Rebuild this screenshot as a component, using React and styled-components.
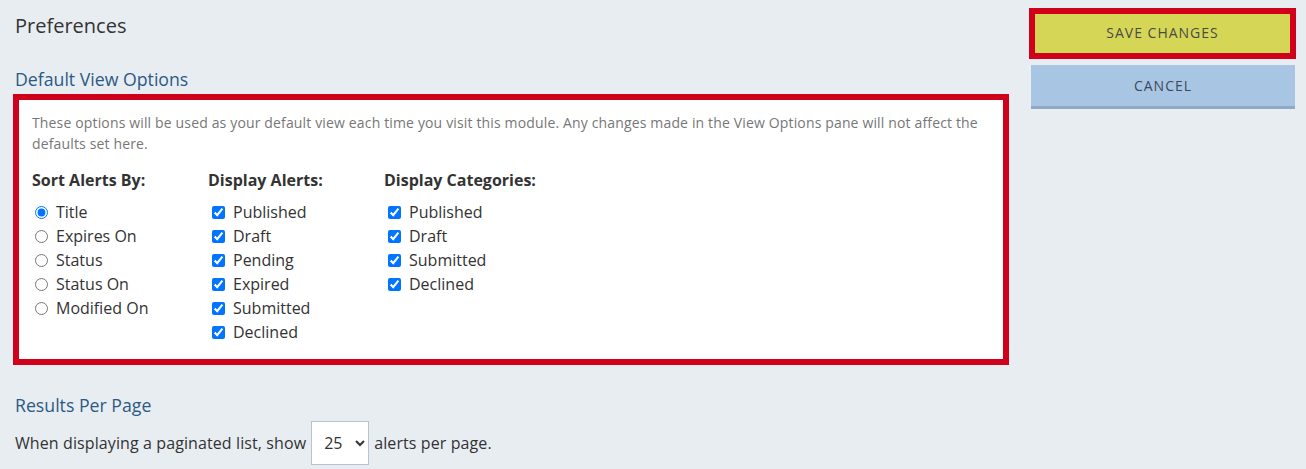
import React from "react";
import styled, { createGlobalStyle } from "styled-components";

const GlobalStyle = createGlobalStyle`
  body {
    margin: 0;
    background: #e8edf2;
    font-family: "Open Sans", "Noto Sans", sans-serif;
  }
`;

const Page = styled.div`
  display: flex;
  align-items: flex-start;
  gap: 20px;
  padding: 8px 10px 0 13px;
  height: 469px;
  box-sizing: border-box;
  overflow: hidden;
`;

const Main = styled.div`
  width: 996px;
  flex-shrink: 0;
`;

const PageTitle = styled.h1`
  margin: 0 0 0 2px;
  padding-top: 4px;
  font-size: 20px;
  line-height: 28px;
  font-weight: 400;
  color: #333;
`;

const SectionTitle = styled.h2`
  margin: ${({ $top }) => $top}px 0 0 2px;
  font-size: 17.7px;
  line-height: 22px;
  font-weight: 400;
  color: #2c5a84;
`;

const OptionsBox = styled.div`
  margin-top: 4px;
  border: 6px solid #d0021b;
  background: #fff;
  padding: 12px 13px 15px;
`;

const Intro = styled.p`
  margin: 0;
  font-size: 14px;
  line-height: 21px;
  letter-spacing: 0.15px;
  color: #777;
`;

const Columns = styled.div`
  display: flex;
  margin-top: 16px;
`;

const Column = styled.div`
  width: 176px;
`;

const ColumnTitle = styled.div`
  font-size: 16px;
  line-height: 20px;
  font-weight: 700;
  color: #333;
  margin-bottom: 10px;
`;

const Option = styled.label`
  display: flex;
  align-items: center;
  height: 24px;
  font-size: 16px;
  color: #333;

  input {
    width: 13px;
    height: 13px;
    margin: 0 8px 0 ${({ $inset }) => $inset}px;
  }
`;

const PerPageRow = styled.div`
  display: flex;
  align-items: center;
  gap: 5px;
  margin: 5px 0 0 2px;
  font-size: 16px;
  letter-spacing: 0.1px;
  color: #333;
`;

const Select = styled.select`
  height: 44px;
  width: 58px;
  padding: 0 4px 0 8px;
  border: 1px solid #b7c3d0;
  border-radius: 0;
  background: #fff;
  font-family: inherit;
  font-size: 16px;
  color: #333;
`;

const Sidebar = styled.div`
  width: 267px;
  flex-shrink: 0;
`;

const Highlight = styled.div`
  border: 6px solid #d0021b;
`;

const Button = styled.button`
  display: block;
  width: 100%;
  height: ${({ $h }) => $h}px;
  padding: 0 0 ${({ $lift }) => $lift || 0}px;
  border: none;
  border-bottom: ${({ $edge }) => ($edge ? `3px solid ${$edge}` : "none")};
  background: ${({ $bg }) => $bg};
  font-family: inherit;
  font-size: 14px;
  letter-spacing: 1px;
  text-transform: uppercase;
  color: ${({ $ink }) => $ink};
  cursor: pointer;
`;

const CancelWrap = styled.div`
  margin: 6px 1px 0 2px;
`;

const sortOptions = ["Title", "Expires On", "Status", "Status On", "Modified On"];
const alertOptions = ["Published", "Draft", "Pending", "Expired", "Submitted", "Declined"];
const categoryOptions = ["Published", "Draft", "Submitted", "Declined"];

export default function App() {
  return (
    <>
      <GlobalStyle />
      <Page>
        <Main>
          <PageTitle>Preferences</PageTitle>
          <SectionTitle $top={28}>Default View Options</SectionTitle>
          <OptionsBox>
            <Intro>
              These options will be used as your default view each time you visit this module. Any
              changes made in the View Options pane will not affect the defaults set here.
            </Intro>
            <Columns>
              <Column>
                <ColumnTitle>Sort Alerts By:</ColumnTitle>
                {sortOptions.map((o, i) => (
                  <Option key={o} $inset={3}>
                    <input type="radio" name="sort" defaultChecked={i === 0} />
                    {o}
                  </Option>
                ))}
              </Column>
              <Column>
                <ColumnTitle>Display Alerts:</ColumnTitle>
                {alertOptions.map((o) => (
                  <Option key={o} $inset={4}>
                    <input type="checkbox" defaultChecked />
                    {o}
                  </Option>
                ))}
              </Column>
              <Column>
                <ColumnTitle>Display Categories:</ColumnTitle>
                {categoryOptions.map((o) => (
                  <Option key={o} $inset={4}>
                    <input type="checkbox" defaultChecked />
                    {o}
                  </Option>
                ))}
              </Column>
            </Columns>
          </OptionsBox>
          <SectionTitle $top={29}>Results Per Page</SectionTitle>
          <PerPageRow>
            When displaying a paginated list, show
            <Select defaultValue="25">
              <option>10</option>
              <option>25</option>
              <option>50</option>
              <option>100</option>
            </Select>
            alerts per page.
          </PerPageRow>
        </Main>
        <Sidebar>
          <Highlight>
            <Button $h={39} $lift={3} $bg="#d5d655" $ink="#4a4a4a">Save Changes</Button>
          </Highlight>
          <CancelWrap>
            <Button $h={44} $bg="#a8c6e3" $edge="#8fa9c7" $ink="#3b4a5c">Cancel</Button>
          </CancelWrap>
        </Sidebar>
      </Page>
    </>
  );
}
